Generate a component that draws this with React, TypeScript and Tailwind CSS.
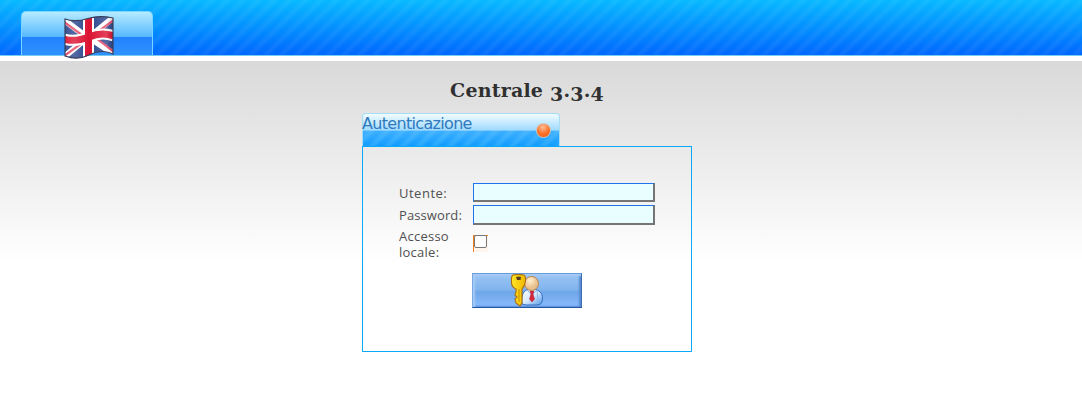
import React from 'react';

function Flag() {
  return (
    <svg className="relative block h-[44px] w-[50px]" viewBox="0 0 50 44">
      <defs>
        <clipPath id="flag-shape">
          <path d="M1 3C9 6 16 5 24 2.5C33 0 41 0 49 2V38C41 34 33 35 25 39C17 43 9 43 1 40Z" />
        </clipPath>
        <linearGradient id="flag-shade" x1="0" x2="1">
          <stop offset="0" stopColor="#fff" stopOpacity=".05" />
          <stop offset=".2" stopColor="#fff" stopOpacity=".2" />
          <stop offset=".5" stopColor="#fff" stopOpacity="0" />
          <stop offset=".85" stopColor="#fff" stopOpacity=".2" />
          <stop offset="1" stopColor="#000" stopOpacity=".1" />
        </linearGradient>
      </defs>
      <g clipPath="url(#flag-shape)">
        <path fill="#2b468e" d="M0 0H50V44H0Z" />
        <path d="M0 4L24 22L50 1M0 41L24 21L50 38" fill="none" stroke="#fff" strokeWidth="6" />
        <path d="M0 6L22 22M50 4L28 20M0 40L22 24M50 36L28 19" fill="none" stroke="#e54865" strokeWidth="2.2" />
        <path d="M24.5 0V44M0 23C9 26 17 24 25 21C34 17 42 17 50 20" fill="none" stroke="#fff" strokeWidth="11" />
        <path d="M24.5 0V44M0 23C9 26 17 24 25 21C34 17 42 17 50 20" fill="none" stroke="#dc1232" strokeWidth="7" />
        <path fill="url(#flag-shade)" d="M0 0H50V44H0Z" />
      </g>
      <path d="M1 3C9 6 16 5 24 2.5C33 0 41 0 49 2V38C41 34 33 35 25 39C17 43 9 43 1 40Z" fill="none" stroke="#39405b" strokeWidth="1.2" />
    </svg>
  );
}

function LoginIcon() {
  return (
    <svg className="block h-[34px] w-[34px]" viewBox="0 0 34 34">
      <defs>
        <linearGradient id="coat" x1="0" x2="1" y1="0" y2="1">
          <stop offset="0" stopColor="#fff" />
          <stop offset=".5" stopColor="#d8e9fc" />
          <stop offset="1" stopColor="#4b94e5" />
        </linearGradient>
        <linearGradient id="gold" x1="0" x2="1">
          <stop offset="0" stopColor="#ffe629" />
          <stop offset="1" stopColor="#f0b800" />
        </linearGradient>
        <radialGradient id="face" cx=".4" cy=".3">
          <stop offset="0" stopColor="#fff0d0" />
          <stop offset="1" stopColor="#eac18c" />
        </radialGradient>
      </defs>
      <path d="M12 30C11 20 14 15 21 15C30 15 34 20 32 28Q31 31 27 31H16Z" fill="url(#coat)" stroke="#326fc0" />
      <path d="M17 16L22 21L27 16L28 30" fill="none" stroke="#8bb9ec" />
      <path d="M20 17H24L23 20L24.5 25L22 28L19.5 25L21 20Z" fill="#d6283d" stroke="#a91830" strokeWidth=".5" />
      <circle cx="21.5" cy="9.5" r="7" fill="url(#face)" stroke="#b98250" />
      <path d="M3 1Q8 -.2 14 1Q16 2 15.5 7Q15 12 12 15V29L10 32L6 29L5 25L7 23L5 21L6 18V15Q1 13 1.5 7Q1 2 3 1Z" fill="url(#gold)" stroke="#a86e12" strokeWidth="1.1" />
      <path d="M9 15V28" stroke="#d39700" strokeWidth="1.2" />
      <path d="M6 3Q9 2 11 3L10.5 6H7Z" fill="#594019" />
    </svg>
  );
}

export default function App() {
  return (
    <div className="h-[419px] overflow-hidden bg-white text-[#505050]">
      <header className="flex h-[55px] items-end bg-[repeating-linear-gradient(135deg,rgba(255,255,255,0)_0_3px,rgba(255,255,255,0.05)_6px_8px,rgba(255,255,255,0)_11px),linear-gradient(#08b9ff,#0067ff)] pl-[21px]">
        <a href="#" aria-label="English" className="flex h-[44px] w-[132px] justify-center rounded-t-[5px] border border-b-0 border-[#79d7ff] bg-[linear-gradient(#b5ebff_0%,#58b9ff_57%,#2281fc_58%,#3092ff_100%)] pt-[4px]">
          <span className="pl-[3px]"><Flag /></span>
        </a>
      </header>
      <div className="h-[6px] border-t border-[#76ccef] bg-white" />
      <main className="flex h-[358px] justify-center bg-[linear-gradient(#d9d9d9,#ffffff_201px)] pr-[28px]">
        <div className="w-[330px]">
          <h1 className="h-[52px] whitespace-nowrap pt-[16px] text-center font-['DejaVu_Serif',serif] text-[19px] leading-[26px] font-bold tracking-[0.2px] text-[#303030]">
            Centrale <span className="inline-block translate-y-[4px]">3</span>.<span className="inline-block translate-y-[4px]">3</span>.<span className="inline-block translate-y-[4px]">4</span>
          </h1>
          <div className="flex h-[33px] w-[198px] justify-between rounded-t-[4px] border border-b-0 border-[#a5ddf5] bg-[linear-gradient(rgba(241,252,255,1),rgba(160,218,255,1)_50%,rgba(75,181,255,0.75)_54%,rgba(18,158,255,0.65)),repeating-linear-gradient(135deg,#109bff_0_3px,#4dbaff_6px_8px,#109bff_11px)]">
            <h2 className="-ml-px font-['DejaVu_Sans',sans-serif] text-[16px] leading-[20px] tracking-[-0.68px] text-[#2f79bd]">Autenticazione</h2>
            <span className="mt-[9px] mr-[8px] h-[15px] w-[15px] rounded-full border border-[#d1c5b6] bg-[radial-gradient(circle_at_45%_25%,#ffc09c,#ff752d_50%,#ed5308)]" />
          </div>
          <form className="h-[206px] border border-[#0ca9f8] pt-[35px] pl-[36px] font-['Open_Sans',sans-serif] text-[13px] leading-[16px]">
            <div className="grid grid-cols-[74px_182px] grid-rows-[20px_20px_33px] gap-y-[2px]">
              <label htmlFor="user" className="pt-[3px] tracking-[0.5px]">Utente:</label>
              <input id="user" className="mt-px h-[19px] w-[182px] border border-r-2 border-b-2 border-t-[#1f73ef] border-l-[#1f73ef] border-r-[#757575] border-b-[#757575] bg-[#e9ffff] outline-none" />
              <label htmlFor="password" className="pt-[3px] tracking-[0.1px]">Password:</label>
              <input id="password" type="password" className="mt-px h-[20px] w-[182px] border border-r-2 border-b-2 border-t-[#1f73ef] border-l-[#1f73ef] border-r-[#757575] border-b-[#757575] bg-[#e9ffff] outline-none" />
              <label htmlFor="local" className="pt-[2px] tracking-[0.25px]">Accesso<br />locale:</label>
              <span className="mt-[9px] h-[17px] w-[15px] border-l border-[#ed811e] bg-[linear-gradient(#ed811e_1px,#fff5ed_1px)]">
                <input id="local" type="checkbox" className="block h-[13px] w-[13px] appearance-none rounded-[2px] border border-[#777] bg-white" />
              </span>
            </div>
            <button type="button" aria-label="Accedi" className="mt-[14px] ml-[73px] flex h-[35px] w-[110px] justify-center border border-t-[#679cd9] border-r-[#3b6fae] border-b-[#23569e] border-l-[#78a9e4] bg-[linear-gradient(#9cc5f3,#80b4ee_48%,#6ea6e8_54%,#89bcff)] shadow-[inset_2px_2px_2px_#a6cbf5,inset_-2px_-1px_2px_#5789d1]">
              <LoginIcon />
            </button>
          </form>
        </div>
      </main>
    </div>
  );
}
